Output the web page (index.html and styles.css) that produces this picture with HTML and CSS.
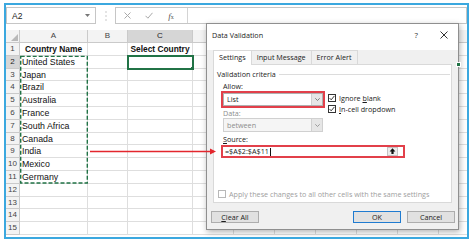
FILE: index.html
```html
<!DOCTYPE html>
<html lang="en">
<head>
    <meta charset="UTF-8">
    <meta name="viewport" content="width=device-width, initial-scale=1.0">
    <title>Data Validation - Drop Down List</title>
    <link rel="stylesheet" href="styles.css">
</head>
<body>
    <div class="window">
        <div class="formula-bar">
            <div class="name-box">
                <span>A2</span>
                <svg width="5" height="3" viewBox="0 0 5 3"><path d="M0 0h5L2.5 3z" fill="#777"/></svg>
            </div>
            <div class="grip">
                <svg width="2" height="12" viewBox="0 0 2 12"><circle cx="1" cy="2" r=".7"/><circle cx="1" cy="6" r=".7"/><circle cx="1" cy="10" r=".7"/></svg>
            </div>
            <div class="formula">
                <div class="formula-buttons">
                    <span><svg width="7" height="7" viewBox="0 0 7 7"><path d="M.5 .5l6 6M6.5 .5l-6 6" stroke="#a9a9a9" stroke-width="1"/></svg></span>
                    <span><svg width="8" height="7" viewBox="0 0 8 7"><path d="M.5 3.8l2.4 2.4L7.5 .8" fill="none" stroke="#a9a9a9" stroke-width="1"/></svg></span>
                    <span class="fx"><i>f</i><small>x</small></span>
                </div>
                <div class="formula-input"></div>
            </div>
        </div>

        <div class="sheet">
            <div class="row head">
                <span class="rh corner"><svg width="7" height="7" viewBox="0 0 7 7"><path d="M7 0v7H0z" fill="#b9b9b9"/></svg></span>
                <span class="ch">A</span>
                <span class="ch">B</span>
                <span class="ch selected">C</span>
                <span class="ch rest"></span>
            </div>
            <div class="row">
                <span class="rh">1</span>
                <span class="cell title">Country Name</span>
                <span class="cell"></span>
                <span class="cell title">Select Country</span>
                <span class="cell rest"></span>
            </div>
            <div class="row">
                <span class="rh selected">2</span>
                <span class="cell">United States</span>
                <span class="cell"></span>
                <span class="cell active"></span>
                <span class="cell rest"></span>
            </div>
            <div class="row">
                <span class="rh">3</span>
                <span class="cell">Japan</span>
                <span class="cell"></span>
                <span class="cell"></span>
                <span class="cell rest"></span>
            </div>
            <div class="row">
                <span class="rh">4</span>
                <span class="cell">Brazil</span>
                <span class="cell"></span>
                <span class="cell"></span>
                <span class="cell rest"></span>
            </div>
            <div class="row">
                <span class="rh">5</span>
                <span class="cell">Australia</span>
                <span class="cell"></span>
                <span class="cell"></span>
                <span class="cell rest"></span>
            </div>
            <div class="row">
                <span class="rh">6</span>
                <span class="cell">France</span>
                <span class="cell"></span>
                <span class="cell"></span>
                <span class="cell rest"></span>
            </div>
            <div class="row">
                <span class="rh">7</span>
                <span class="cell">South Africa</span>
                <span class="cell"></span>
                <span class="cell"></span>
                <span class="cell rest"></span>
            </div>
            <div class="row">
                <span class="rh">8</span>
                <span class="cell">Canada</span>
                <span class="cell"></span>
                <span class="cell"></span>
                <span class="cell rest"></span>
            </div>
            <div class="row">
                <span class="rh">9</span>
                <span class="cell">India</span>
                <span class="cell"></span>
                <span class="cell"></span>
                <span class="cell rest"></span>
            </div>
            <div class="row">
                <span class="rh">10</span>
                <span class="cell">Mexico</span>
                <span class="cell"></span>
                <span class="cell"></span>
                <span class="cell rest"></span>
            </div>
            <div class="row">
                <span class="rh">11</span>
                <span class="cell">Germany</span>
                <span class="cell"></span>
                <span class="cell"></span>
                <span class="cell rest"></span>
            </div>
            <div class="row">
                <span class="rh">12</span>
                <span class="cell"></span>
                <span class="cell"></span>
                <span class="cell"></span>
                <span class="cell rest"></span>
            </div>
            <div class="row">
                <span class="rh">13</span>
                <span class="cell"></span>
                <span class="cell"></span>
                <span class="cell"></span>
                <span class="cell rest"></span>
            </div>
            <div class="row">
                <span class="rh">14</span>
                <span class="cell"></span>
                <span class="cell"></span>
                <span class="cell"></span>
                <span class="cell rest"></span>
            </div>
            <div class="row">
                <span class="rh">15</span>
                <span class="cell"></span>
                <span class="cell"></span>
                <span class="cell"></span>
                <span class="cell rest"></span>
            </div>
        </div>

        <div class="dialog">
            <div class="dialog-title">
                <span class="title-text">Data Validation</span>
                <span class="title-help">?</span>
                <svg class="title-close" width="8" height="8" viewBox="0 0 8 8"><path d="M.5 .5l7 7M7.5 .5l-7 7" stroke="#333" stroke-width="1"/></svg>
            </div>
            <div class="tabs">
                <span class="tab active">Settings</span>
                <span class="tab">Input Message</span>
                <span class="tab">Error Alert</span>
            </div>
            <div class="panel">
                <div class="group-label">Validation criteria</div>
                <div class="criteria">
                    <div class="criteria-left">
                        <div class="label">Allow:</div>
                        <div class="marked">
                            <div class="combo">
                                <span>List</span>
                                <span class="drop"><svg width="5" height="3" viewBox="0 0 5 3"><path d="M.3 .3l2.2 2.2L4.7 .3" fill="none" stroke="#666" stroke-width=".8"/></svg></span>
                            </div>
                        </div>
                        <div class="label disabled">Data:</div>
                        <div class="combo off">
                            <span>between</span>
                            <span class="drop"><svg width="5" height="3" viewBox="0 0 5 3"><path d="M.3 .3l2.2 2.2L4.7 .3" fill="none" stroke="#888" stroke-width=".8"/></svg></span>
                        </div>
                    </div>
                    <div class="checks">
                        <div class="check">
                            <span class="box"><svg width="6" height="6" viewBox="0 0 6 6"><path d="M.6 3.1l1.6 1.7L5.4 .9" fill="none" stroke="#222" stroke-width=".9"/></svg></span>
                            <span>Ignore <u>b</u>lank</span>
                        </div>
                        <div class="check">
                            <span class="box"><svg width="6" height="6" viewBox="0 0 6 6"><path d="M.6 3.1l1.6 1.7L5.4 .9" fill="none" stroke="#222" stroke-width=".9"/></svg></span>
                            <span><u>I</u>n-cell dropdown</span>
                        </div>
                    </div>
                </div>
                <div class="label source"><u>S</u>ource:</div>
                <div class="marked wide">
                    <div class="ref-input">
                        <span>=$A$2:$A$11</span>
                        <span class="cursor"></span>
                        <span class="collapse"><svg width="7" height="7" viewBox="0 0 7 7"><path d="M3.5 .3L.6 3.4h1.8V6h2.2V3.4h1.8z" fill="#111"/></svg></span>
                    </div>
                </div>
                <div class="check apply">
                    <span class="box"></span>
                    <span>Apply these changes to all other cells with the same settings</span>
                </div>
            </div>
            <div class="dialog-buttons">
                <span class="btn"><u>C</u>lear All</span>
                <span class="btn default">OK</span>
                <span class="btn">Cancel</span>
            </div>
        </div>

        <svg class="marks" width="461" height="231" viewBox="6 5 461 231">
            <rect x="20.7" y="56.4" width="66.6" height="126.6" fill="none" stroke="#217346" stroke-width="1.4" stroke-dasharray="4 2"/>
            <path d="M90 151.5H211" stroke="#e3262d" stroke-width="1.5"/>
            <path d="M216 151.5l-6-3v6z" fill="#e3262d"/>
        </svg>
    </div>
</body>
</html>
```

FILE: styles.css
```css
body {
    margin: 0;
    background: #fff;
    font-family: 'Liberation Sans', Arial, sans-serif;
}
.window {
    position: relative;
    box-sizing: border-box;
    width: 465px;
    height: 236px;
    margin: 3px 0 0 4px;
    border: 2px solid #3ba8df;
    overflow: hidden;
}

/* formula bar */
.formula-bar {
    display: flex;
    box-sizing: border-box;
    height: 25px;
    padding-top: 2px;
}
.name-box {
    display: flex;
    align-items: center;
    justify-content: space-between;
    box-sizing: border-box;
    width: 90px;
    height: 17px;
    padding: 0 5px;
    border: 1px solid #c6c6c6;
    font-size: 8.5px;
    color: #222;
}
.grip {
    display: flex;
    align-items: center;
    justify-content: center;
    width: 19px;
    height: 17px;
    fill: #b4b4b4;
}
.formula {
    flex: 1;
    display: flex;
    box-sizing: border-box;
    height: 17px;
    border: 1px solid #c6c6c6;
}
.formula-buttons {
    display: flex;
    width: 71px;
    border-right: 1px solid #d4d4d4;
}
.formula-buttons span {
    display: flex;
    align-items: center;
    justify-content: center;
    width: 22px;
}
.fx {
    font-family: 'Liberation Serif', serif;
    font-size: 9px;
    color: #555;
}
.fx small {
    font-size: 6px;
    margin-top: 3px;
}
.formula-input {
    flex: 1;
}

/* sheet grid */
.row {
    display: grid;
    grid-template-columns: 14px 68px 40px 65px 1fr;
    height: 12.8px;
}
.row.head {
    height: 13px;
}
.row > span {
    box-sizing: border-box;
    overflow: hidden;
    white-space: nowrap;
    border-right: 1px solid #dedede;
    border-bottom: 1px solid #dedede;
    font-size: 8.8px;
    line-height: 12px;
    color: #111;
}
.row > .rh,
.row > .ch {
    background: #f3f3f3;
    border-color: #cacaca;
    text-align: center;
    font-size: 8px;
    color: #444;
}
.row > .selected {
    background: #d6d6d6;
    color: #222;
}
.corner {
    display: flex;
    align-items: flex-end;
    justify-content: flex-end;
    padding: 0 1px 1px 0;
}
.cell {
    padding-left: 2px;
}
.row > .title {
    padding-left: 0;
    text-align: center;
    font-weight: bold;
    font-size: 8.4px;
}
.row > .rest {
    border-right: none;
    background: repeating-linear-gradient(90deg, transparent 0 40px, #dedede 40px 41px);
}
.row > .ch.rest {
    background: repeating-linear-gradient(90deg, #f3f3f3 0 40px, #cacaca 40px 41px);
}
.row > .active {
    position: relative;
    outline: 2px solid #217346;
    outline-offset: -1px;
}
.active::after {
    content: '';
    position: absolute;
    right: -3px;
    bottom: -3px;
    z-index: 1;
    width: 3px;
    height: 3px;
    background: #217346;
    border: 1px solid #fff;
}

/* data validation dialog */
.dialog {
    position: absolute;
    left: 200px;
    top: 18px;
    display: flex;
    flex-direction: column;
    box-sizing: border-box;
    width: 253px;
    height: 207px;
    border: 1px solid #8f8f8f;
    background: #f0f0f0;
    box-shadow: 1px 2px 6px rgba(0, 0, 0, 0.3);
    font-family: 'Open Sans', sans-serif;
    font-size: 7.2px;
    color: #1b1b1b;
}
.dialog-title {
    display: flex;
    align-items: center;
    box-sizing: border-box;
    height: 26px;
    padding: 0 0 4px 5px;
    background: #fff;
    line-height: 10px;
}
.title-text {
    flex: 1;
}
.title-help {
    margin-right: 22px;
    font-size: 8px;
    color: #333;
}
.title-close {
    margin-right: 10px;
}
.tabs {
    position: relative;
    z-index: 1;
    display: flex;
    align-items: flex-end;
    height: 14px;
    padding-left: 7px;
}
.tab {
    box-sizing: border-box;
    height: 14px;
    margin-left: -1px;
    padding: 0 5px;
    border: 1px solid #d9d9d9;
    border-bottom: none;
    line-height: 13px;
}
.tab.active {
    height: 15px;
    margin-bottom: -1px;
    background: #fff;
}
.panel {
    display: flex;
    flex-direction: column;
    box-sizing: border-box;
    height: 139px;
    margin: 0 6px;
    padding: 4px 0 3px;
    border: 1px solid #d9d9d9;
    background: #fff;
}
.group-label {
    display: flex;
    align-items: center;
    height: 10px;
    padding-left: 3px;
    margin-right: 1px;
}
.group-label::after {
    content: '';
    flex: 1;
    margin-left: 3px;
    border-top: 1px solid #dcdcdc;
}
.criteria {
    display: flex;
    margin-top: 2px;
    padding-left: 7px;
}
.criteria-left {
    width: 104px;
}
.label {
    height: 10px;
    padding-left: 2px;
    line-height: 10px;
}
.label.disabled {
    color: #8d8d8d;
}
.label.source {
    margin: 2px 0 1px 7px;
}
.marked {
    box-sizing: border-box;
    height: 17px;
    border: 2px solid #e2404a;
}
.combo {
    display: flex;
    box-sizing: border-box;
    height: 13px;
    padding-left: 3px;
    border: 1px solid #b0b0b0;
    background: #fff;
    line-height: 11px;
}
.combo.off {
    width: 100px;
    height: 14px;
    margin-left: 2px;
    border-color: #d0d0d0;
    background: #f5f5f5;
    color: #8d8d8d;
    line-height: 12px;
}
.drop {
    display: flex;
    align-items: center;
    justify-content: center;
    width: 10px;
    margin-left: auto;
    border-left: 1px solid #d0d0d0;
    background: #e6e6e6;
}
.checks {
    margin-left: 3px;
    padding-top: 11.5px;
}
.check {
    display: flex;
    align-items: center;
    gap: 3px;
    height: 11px;
}
.box {
    display: flex;
    align-items: center;
    justify-content: center;
    box-sizing: border-box;
    width: 8px;
    height: 8px;
    border: 1px solid #333;
    background: #fff;
}
.marked.wide {
    width: 184px;
    height: 13px;
    margin-left: 7px;
}
.ref-input {
    display: flex;
    align-items: center;
    height: 9px;
    padding-left: 2px;
    line-height: 9px;
}
.cursor {
    width: 1px;
    height: 8px;
    margin-left: 1px;
    background: #111;
}
.collapse {
    display: flex;
    align-items: center;
    justify-content: center;
    box-sizing: border-box;
    width: 11px;
    height: 9px;
    margin: 0 5px 0 auto;
    border: 1px solid #c4c4c4;
    background: #ececec;
}
.check.apply {
    margin: auto 0 0 4px;
    height: 10px;
    color: #a0a0a0;
}
.apply .box {
    border-color: #b8b8b8;
}
.dialog-buttons {
    display: flex;
    gap: 6px;
    padding: 8px 3px 0 4px;
}
.btn {
    box-sizing: border-box;
    width: 48px;
    height: 12px;
    border: 1px solid #adadad;
    background: #e1e1e1;
    text-align: center;
    line-height: 10px;
}
.btn.default {
    margin-left: auto;
    border-color: #1f7bd0;
}

/* copy marquee and pointer arrow */
.marks {
    position: absolute;
    left: 0;
    top: 0;
    pointer-events: none;
}
```
